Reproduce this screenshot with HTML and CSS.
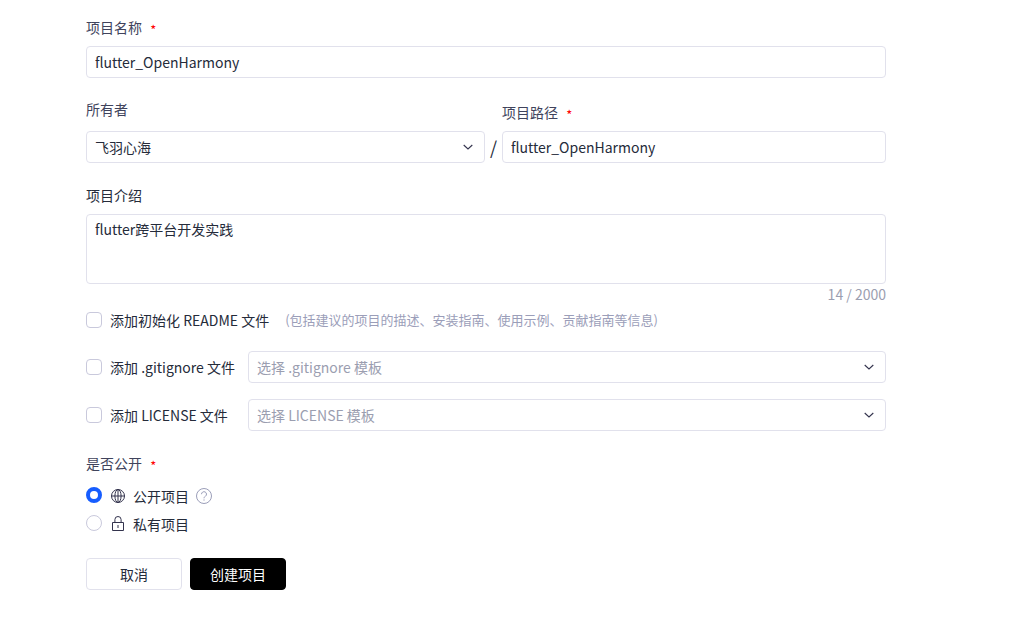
FILE: index.html
```html
<!DOCTYPE html>
<html lang="zh-CN">
  <head>
    <meta charset="UTF-8" />
    <title>创建项目</title>
    <link rel="stylesheet" href="styles.css">
  </head>
  <body>
    <form class="container">
      <div class="field name">
        <label class="label" for="projectName">项目名称 <span class="required">*</span></label>
        <input class="input" type="text" id="projectName" value="flutter_OpenHarmony" />
      </div>

      <div class="location">
        <div class="field owner">
          <p class="label">所有者</p>
          <div class="select">
            <span>飞羽心海</span>
            <svg class="arrow" viewBox="0 0 12 12"><path d="M1.7 4 6 8l4.3-4" /></svg>
          </div>
        </div>
        <span class="slash">/</span>
        <div class="field path">
          <label class="label" for="projectPath">项目路径 <span class="required">*</span></label>
          <input class="input" type="text" id="projectPath" value="flutter_OpenHarmony" />
        </div>
      </div>

      <div class="field intro">
        <label class="label dark" for="projectIntro">项目介绍</label>
        <textarea class="textarea" id="projectIntro">flutter跨平台开发实践</textarea>
        <p class="count">14 / 2000</p>
      </div>

      <div class="option readme">
        <input class="checkbox" type="checkbox" id="readme" />
        <label for="readme">添加初始化 README 文件</label>
        <span class="tip">(包括建议的项目的描述、安装指南、使用示例、贡献指南等信息)</span>
      </div>
      <div class="option">
        <input class="checkbox" type="checkbox" id="gitignore" />
        <label class="option-name" for="gitignore">添加 .gitignore 文件</label>
        <div class="select placeholder">
          <span>选择 .gitignore 模板</span>
          <svg class="arrow" viewBox="0 0 12 12"><path d="M1.7 4 6 8l4.3-4" /></svg>
        </div>
      </div>
      <div class="option">
        <input class="checkbox" type="checkbox" id="license" />
        <label class="option-name" for="license">添加 LICENSE 文件</label>
        <div class="select placeholder">
          <span>选择 LICENSE 模板</span>
          <svg class="arrow" viewBox="0 0 12 12"><path d="M1.7 4 6 8l4.3-4" /></svg>
        </div>
      </div>

      <div class="visibility">
        <p class="label">是否公开 <span class="required">*</span></p>
        <div class="choice">
          <input class="radio" type="radio" name="visibility" id="public" checked />
          <label for="public">
            <svg class="icon" viewBox="0 0 16 16">
              <circle cx="8" cy="8" r="6.5" />
              <ellipse cx="8" cy="8" rx="3.1" ry="6.5" />
              <path d="M1.5 8h13M8 1.5v13" />
            </svg>
            公开项目
          </label>
          <svg class="help" viewBox="0 0 16 16">
            <circle cx="8" cy="8" r="7.5" />
            <path d="M5.5 6.2a2.5 2.5 0 1 1 4 2C8.5 8.9 8 9.2 8 10.3M8 11.4v1.2" />
          </svg>
        </div>
        <div class="choice">
          <input class="radio" type="radio" name="visibility" id="private" />
          <label for="private">
            <svg class="icon" viewBox="0 0 16 16">
              <path d="M2.5 6.5h11v8h-11zM4.9 6.5V3.6a3.1 3.1 0 0 1 6.2 0v2.9M8 9v3" />
            </svg>
            私有项目
          </label>
        </div>
      </div>

      <div class="buttons">
        <button class="button" type="button">取消</button>
        <button class="button primary" type="button">创建项目</button>
      </div>
    </form>
  </body>
</html>
```
FILE: styles.css
```css
* {
  box-sizing: border-box;
}
body {
  margin: 0;
  background-color: #fff;
  color: #252b3a;
  font-family: "Noto Sans CJK SC", sans-serif;
  font-size: 14px;
  line-height: 22px;
}
p {
  margin: 0;
}
input,
textarea,
button {
  margin: 0;
  color: inherit;
  font: inherit;
}
.container {
  width: 800px;
  margin-left: 86px;
  padding-top: 16px;
}
.field {
  display: flex;
  flex-direction: column;
}
.label {
  height: 22px;
  color: #40435c;
}
.dark {
  color: #252b3a;
}
.required {
  display: inline-block;
  height: 20px;
  margin-left: 5px;
  color: #f00;
  font-size: 13px;
  line-height: 22px;
  vertical-align: -2px;
}
.input,
.select,
.textarea {
  border: 1px solid #e1e1ec;
  border-radius: 4px;
  background-color: #fff;
  outline: none;
}
.input {
  height: 32px;
  padding: 0 8px;
}
.name {
  gap: 8px;
}
.location {
  display: flex;
  align-items: flex-end;
  margin-top: 20px;
}
.owner {
  width: 399px;
  gap: 11px;
}
.path {
  width: 384px;
  gap: 8px;
}
.slash {
  width: 17px;
  height: 32px;
  font-size: 18px;
  line-height: 32px;
  text-align: center;
}
.select {
  display: flex;
  flex: 1;
  align-items: center;
  justify-content: space-between;
  height: 32px;
  padding: 0 10px 0 8px;
}
.owner .select {
  flex: none;
}
.placeholder {
  color: #9b9eb0;
}
.arrow {
  width: 12px;
  height: 12px;
  fill: none;
  stroke: #33334d;
  stroke-width: 1.1;
}
.intro {
  margin-top: 21px;
}
.textarea {
  height: 70px;
  margin-top: 8px;
  padding: 3px 8px;
  resize: none;
}
.count {
  height: 22px;
  color: #9b9eb0;
  line-height: 20px;
  text-align: right;
}
.option {
  display: flex;
  align-items: center;
  height: 32px;
  margin-bottom: 16px;
}
.readme {
  height: 28px;
  margin-bottom: 17px;
}
.checkbox,
.radio {
  flex: none;
  width: 16px;
  height: 16px;
  border: 1px solid #c9c9dc;
  background-color: #fff;
  appearance: none;
}
.checkbox {
  margin-right: 8px;
  border-radius: 4px;
}
.tip {
  margin-left: 16px;
  color: #9b9eb9;
  font-size: 13px;
}
.option-name {
  width: 138px;
}
.visibility {
  margin-top: 21px;
}
.choice {
  display: flex;
  align-items: center;
  height: 28px;
}
.visibility .label {
  margin-bottom: 7px;
}
.radio {
  margin-right: 8px;
  border-radius: 50%;
}
.radio:checked {
  border: 4px solid #165dff;
}
.choice label {
  display: flex;
  align-items: center;
  gap: 7px;
  padding-top: 2px;
}
.icon,
.help {
  width: 16px;
  height: 16px;
  fill: none;
  stroke: #33334d;
}
.help {
  margin-top: 2px;
  margin-left: 7px;
  stroke: #9b9eb9;
}
.buttons {
  display: flex;
  gap: 8px;
  margin-top: 21px;
}
.button {
  width: 96px;
  height: 32px;
  padding: 0;
  border: 1px solid #e1e1ec;
  border-radius: 4px;
  background-color: #fff;
}
.primary {
  border-color: #000;
  background-color: #000;
  color: #fff;
}
```
